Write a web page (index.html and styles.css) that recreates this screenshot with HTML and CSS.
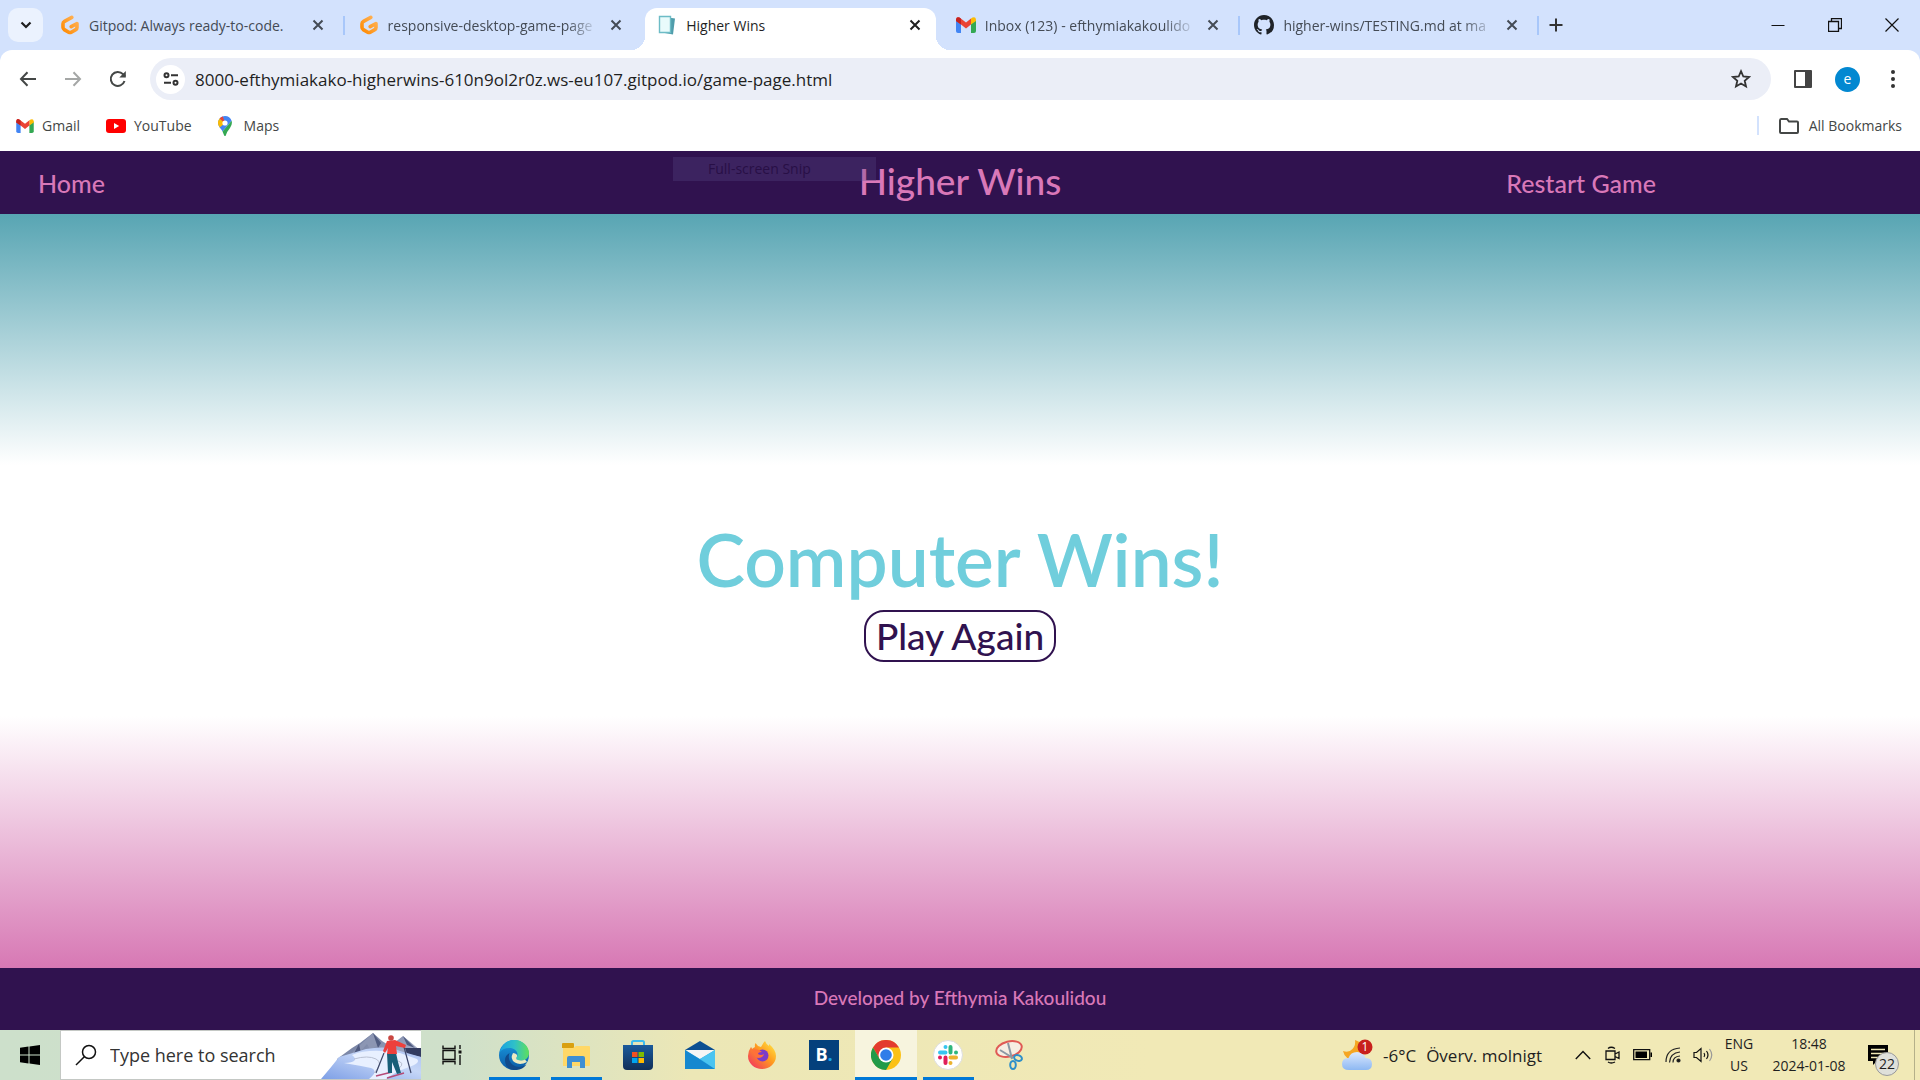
FILE: index.html
```html
<!DOCTYPE html>
<html lang="en">
<head>
<meta charset="utf-8">
<title>Higher Wins</title>
<link rel="stylesheet" href="styles.css">
</head>
<body>
<svg class="defs" aria-hidden="true">
  <defs>
    <linearGradient id="gp" x1="1" y1="0" x2="0" y2="1"><stop offset="0" stop-color="#ffb45b"/><stop offset="1" stop-color="#ff8a00"/></linearGradient>
    <linearGradient id="edgeA" x1="0" y1="0.3" x2="1" y2="0.3"><stop offset="0" stop-color="#1ba3e0"/><stop offset="0.5" stop-color="#2fc0c8"/><stop offset="1" stop-color="#5fe05a"/></linearGradient>
    <linearGradient id="edgeB" x1="0" y1="0" x2="0" y2="1"><stop offset="0" stop-color="#1b9de2"/><stop offset="1" stop-color="#0c59a4"/></linearGradient>
    <linearGradient id="ffx" x1="1" y1="0" x2="0" y2="1"><stop offset="0" stop-color="#fff14a"/><stop offset="0.45" stop-color="#ff9a1f"/><stop offset="1" stop-color="#f0256a"/></linearGradient>
    <linearGradient id="store" x1="0" y1="0" x2="0" y2="1"><stop offset="0" stop-color="#1a5a9c"/><stop offset="1" stop-color="#112f58"/></linearGradient>
    <linearGradient id="cloud" x1="0" y1="0" x2="0" y2="1"><stop offset="0" stop-color="#dbe8ff"/><stop offset="1" stop-color="#8db8f2"/></linearGradient>
    <linearGradient id="snow" x1="0" y1="1" x2="1" y2="0"><stop offset="0" stop-color="#7d9fe6"/><stop offset="0.6" stop-color="#c5d6f7"/><stop offset="1" stop-color="#a9c0f0"/></linearGradient>
    <linearGradient id="rock" x1="0" y1="0" x2="1" y2="1"><stop offset="0" stop-color="#5f6d92"/><stop offset="1" stop-color="#c8cde0"/></linearGradient>
    <symbol id="i-close" viewBox="0 0 12 12"><path d="M1.5 1.5l9 9M10.5 1.5l-9 9" fill="none" stroke="currentColor" stroke-width="2"/></symbol>
    <symbol id="i-gitpod" viewBox="0 0 20 20"><path d="M11.800 2.400L4.500 6.300Q3 7.100 3 8.700v3.600q0 1.500 1.300 2.300l4.400 2.600q1.300.7 2.600 0l4.500-2.600q1.200-.7 1.200-2.100V8.500l-5.800 3.100" fill="none" stroke="url(#gp)" stroke-width="3.600" stroke-linecap="round" stroke-linejoin="round"/></symbol>
    <symbol id="i-gmail" viewBox="0 0 20 16"><path d="M0 3v11q0 2 2 2h3V6.5z" fill="#4285f4"/><path d="M20 3v11q0 2-2 2h-3V6.5z" fill="#34a853"/><path d="M15 1.5v6L20 4V2.6Q19.5-.8 16.500.6z" fill="#fbbc04"/><path d="M0 4V2.4Q.6-.9 3.500.6L10 5.400 15 1.500v6L10 11.500 5 7.500z" fill="#ea4335"/><path d="M0 4V2.400Q.6-.9 3.500.6L5 1.700v5.800z" fill="#c5221f"/></symbol>
  </defs>
</svg>

<div class="tabstrip">
  <button class="tab-search" aria-label="Search tabs"><svg width="12" height="8" viewBox="0 0 12 8"><path d="M1.500 1.500L6 6l4.500-4.500" fill="none" stroke="#1f1f1f" stroke-width="2.200"/></svg></button>
  <div class="tabs">
    <div class="tab sep"><svg class="fav"><use href="#i-gitpod"/></svg><span class="tab-title">Gitpod: Always ready-to-code.</span><button class="tab-close" aria-label="Close tab"><svg><use href="#i-close"/></svg></button></div>
    <div class="tab"><svg class="fav"><use href="#i-gitpod"/></svg><span class="tab-title faded">responsive-desktop-game-page</span><button class="tab-close" aria-label="Close tab"><svg><use href="#i-close"/></svg></button></div>
    <div class="tab active"><svg class="fav" viewBox="0 0 20 20"><path d="M8 2l10 1.500-2 16L5 17.500z" fill="#4f9dab"/><path d="M2.500 1.500h11v16h-11z" fill="#e9fbfb" stroke="#6dbcc6" stroke-width="1.400"/></svg><span class="tab-title">Higher Wins</span><button class="tab-close" aria-label="Close tab"><svg><use href="#i-close"/></svg></button></div>
    <div class="tab sep"><svg class="fav"><use href="#i-gmail"/></svg><span class="tab-title faded">Inbox (123) - efthymiakakoulido</span><button class="tab-close" aria-label="Close tab"><svg><use href="#i-close"/></svg></button></div>
    <div class="tab sep"><svg class="fav" viewBox="0 0 16 16"><path fill="#1f2328" d="M8 0C3.580 0 0 3.580 0 8c0 3.540 2.290 6.530 5.470 7.590.4.070.55-.17.55-.38 0-.19-.01-.82-.01-1.490-2.010.37-2.530-.49-2.690-.94-.09-.23-.48-.94-.82-1.130-.28-.15-.68-.52-.01-.53.63-.01 1.080.58 1.230.82.72 1.210 1.870.87 2.330.66.070-.52.28-.87.51-1.070-1.780-.2-3.640-.89-3.640-3.950 0-.87.31-1.590.82-2.150-.08-.2-.36-1.020.08-2.120 0 0 .67-.21 2.200.82.640-.18 1.320-.27 2-.27s1.360.09 2 .27c1.530-1.040 2.200-.82 2.200-.82.44 1.100.16 1.920.08 2.120.51.56.82 1.270.82 2.150 0 3.070-1.870 3.750-3.650 3.950.29.25.54.73.54 1.480 0 1.070-.01 1.930-.01 2.200 0 .21.15.46.55.38A8.010 8.010 0 0 0 16 8c0-4.420-3.580-8-8-8z"/></svg><span class="tab-title faded">higher-wins/TESTING.md at ma</span><button class="tab-close" aria-label="Close tab"><svg><use href="#i-close"/></svg></button></div>
  </div>
  <button class="new-tab" aria-label="New tab"><svg width="14" height="14" viewBox="0 0 14 14"><path d="M7 .5v13M.5 7h13" stroke="#333" stroke-width="2"/></svg></button>
  <div class="window-controls">
    <button aria-label="Minimize"><svg width="14" height="14" viewBox="0 0 14 14"><path d="M.5 7.500h13" stroke="#111"/></svg></button>
    <button aria-label="Restore"><svg width="14" height="14" viewBox="0 0 14 14"><path d="M.5 3.500h10v10H.5zM3.500 3.500v-3h10v10h-3" fill="none" stroke="#111" stroke-width="1.300"/></svg></button>
    <button aria-label="Close"><svg width="14" height="14" viewBox="0 0 14 14"><path d="M.5.5l13 13M13.500.5l-13 13" stroke="#111" stroke-width="1.200"/></svg></button>
  </div>
</div>

<div class="chrome">
  <div class="toolbar">
    <button class="tool" aria-label="Back"><svg width="18" height="16" viewBox="0 0 18 16"><path d="M17 8H2M8.500 1.300L2 8l6.500 6.700" fill="none" stroke="#444746" stroke-width="2"/></svg></button>
    <button class="tool" aria-label="Forward"><svg width="18" height="16" viewBox="0 0 18 16"><path d="M1 8h15M9.500 1.300L16 8l-6.500 6.700" fill="none" stroke="#a5a7a6" stroke-width="2"/></svg></button>
    <button class="tool" aria-label="Reload"><svg width="18" height="18" viewBox="0 0 18 18"><path d="M15.500 11A7 7 0 1 1 14 4.200L16 6.500" fill="none" stroke="#444746" stroke-width="2"/><path d="M16.800 1v6.500h-6.500z" fill="#444746"/></svg></button>
    <div class="omnibox">
      <button class="site-info" aria-label="Site information"><svg width="16" height="14" viewBox="0 0 16 14" fill="none" stroke="#333" stroke-width="2"><circle cx="3.500" cy="3.200" r="2"/><path d="M8 3.200h7M1 10.800h7"/><circle cx="12.500" cy="10.800" r="2"/></svg></button>
      <input class="url" type="text" aria-label="Address" value="8000-efthymiakako-higherwins-610n9ol2r0z.ws-eu107.gitpod.io/game-page.html">
      <button class="star" aria-label="Bookmark this tab"><svg width="20" height="20" viewBox="0 0 20 20"><path d="M10 2.200l2.300 5.300 5.700.5-4.300 3.800 1.300 5.700-5-3-5 3 1.300-5.700L2 8l5.700-.5z" fill="none" stroke="#333" stroke-width="1.800"/></svg></button>
    </div>
    <button class="end-tool" aria-label="Side panel"><svg width="18" height="18" viewBox="0 0 18 18"><path d="M1 1h16v16H1z" fill="none" stroke="#444" stroke-width="2" stroke-linejoin="round"/><path d="M11 1h6v16h-6z" fill="#444"/></svg></button>
    <button class="end-tool" aria-label="Profile"><span class="avatar">e</span></button>
    <button class="end-tool" aria-label="Menu"><svg width="4" height="18" viewBox="0 0 4 18" fill="#333"><circle cx="2" cy="2" r="2"/><circle cx="2" cy="9" r="2"/><circle cx="2" cy="16" r="2"/></svg></button>
  </div>
  <nav class="bookmarks">
    <a href="#"><svg width="18" height="14"><use href="#i-gmail"/></svg>Gmail</a>
    <a href="#"><svg width="20" height="14" viewBox="0 0 20 14"><rect width="20" height="14" rx="3" fill="#f00"/><path d="M8 4l5.200 3L8 10z" fill="#fff"/></svg>YouTube</a>
    <a href="#" class="maps"><svg width="14" height="20" viewBox="0 0 14 20"><path d="M7 0a7 7 0 0 1 6.600 4.700L4.500 15.500Q3.500 13.500 1.700 11.500.100 9.500 0 7a7 7 0 0 1 7-7z" fill="#4285f4"/><path d="M1.600 2.500L7 7 1.700 11.500Q0 9.500 0 7t1.600-4.500z" fill="#fbbc04"/><path d="M1.600 2.500A7 7 0 0 1 4.800.4L7 7z" fill="#ea4335"/><path d="M13.600 4.700Q14.700 8.500 12 12q-3 3.500-4.200 7.400-.8 1.200-1.600 0L4.500 15.500z" fill="#34a853"/><circle cx="7" cy="7" r="2.600" fill="#fff"/></svg>Maps</a>
    <a href="#" class="all"><svg width="20" height="16" viewBox="0 0 20 16"><path d="M1 2.500V14q0 1 1 1h16q1 0 1-1V4.500q0-1-1-1h-8L8 1H2Q1 1 1 2.500z" fill="none" stroke="#444746" stroke-width="2"/></svg>All Bookmarks</a>
  </nav>
</div>

<header class="game-header">
  <a href="#" class="home">Home</a>
  <h1>Higher Wins</h1>
  <a href="#" class="restart">Restart Game</a>
  <span class="snip-ghost">Full-screen Snip</span>
</header>
<main class="game">
  <h2>Computer Wins!</h2>
  <button class="play">Play Again</button>
</main>
<footer class="game-footer">Developed by Efthymia Kakoulidou</footer>

<div class="taskbar">
  <button class="start" aria-label="Start"><svg width="20" height="20" viewBox="0 0 20 20"><path d="M0 2.800L8.500 1.600v8H0zM9.500 1.500L20 0v9.600H9.500zM0 10.400h8.500v8L0 17.200zM9.500 10.400H20V20L9.500 18.500z"/></svg></button>
  <label class="search">
    <svg width="22" height="22" viewBox="0 0 22 22"><circle cx="14" cy="8" r="6.500" fill="none" stroke="#111" stroke-width="1.500"/><path d="M9.300 12.700L1 21" stroke="#111" stroke-width="1.500"/></svg>
    <input type="text" aria-label="Search" placeholder="Type here to search">
    <svg class="skier" width="100" height="48" viewBox="0 0 100 48">
      <path d="M16 28L31 17l8-5L52 2l9 8 8 5L82 5l18 15v28H16z" fill="url(#rock)"/>
      <path d="M52 2l4 12-6 6-4-7-8 9-2 7-12 0 14-14z" fill="#8c96b3"/>
      <path d="M52 2l8 10-3 5zM82 5l12 12-8-3zM38 13l2 9-8 2z" fill="#4f5b80"/>
      <path d="M84 17l16 0v9l-14-3z" fill="#333c60"/>
      <path d="M0 48Q12 34 18 26q14-4 27-8 22-4 34 2l21 6v22z" fill="url(#snow)"/>
      <path d="M31 24q12-5 30-4l18 2 17 6q4 4-8 8-14 5-23 12H48q10-8 2-11-9-2-27-5 17-1 8-8z" fill="#e8f0ff"/>
      <path d="M33 28q14-4 22 0t-2 14M72 29q15 2 5 9" fill="none" stroke="#b9c0d2"/>
      <path d="M63 22l-8 20M83 16l7 26" stroke="#3c4668" stroke-width="1.200"/>
      <path d="M55 45l16-4M66 47l17-5" stroke="#b54b77" stroke-width="1.500"/>
      <path d="M66 22h9l2 9 3 11-4 1-5-12v11h-4z" fill="#195f78"/>
      <path d="M66 10l8-1 11 5-1 3-9-2 1 8H66l1-6-3 5-2-2z" fill="#ed403c"/>
      <circle cx="70" cy="7" r="2.800" fill="#c94742"/>
    </svg>
  </label>
  <button class="app" aria-label="Task view"><svg width="20" height="20" viewBox="0 0 20 20" fill="none" stroke="#111" stroke-width="1.400"><path d="M1 5.500h12v9H1zM1 .5v3h12v-3M1 19.500v-3h12v3M18 0v4M18 10v10"/><path d="M16.500 5.500h3v3h-3z" fill="#111" stroke="none"/></svg></button>
  <button class="app open" aria-label="Edge"><svg width="30" height="30" viewBox="0 0 30 30"><circle cx="15" cy="15" r="15" fill="url(#edgeB)"/><path d="M1 12C3 4 9 0 15 0c9 0 15 6.500 15 13 0 5-4 7.500-8 7.500-3 0-5-1-5-2 0-1 1.500-1.500 1.500-4 0-4-4-6.500-8-6.500C6 8 3 9.500 1 12z" fill="url(#edgeA)"/><path d="M10.500 13Q8 20 14 25q6 4 13.500-.5Q23 30.500 15 30 6 29 6 20q0-4.500 4.500-7z" fill="#114a8b"/><path d="M14 13q-3.500 6 2 9.500 5 3 12-.5l-2-2.500q-3 1.500-7 .5-3-1-1-3.500.8-3-4-3.500z" fill="#eceac2"/></svg></button>
  <button class="app open" aria-label="File Explorer"><svg width="28" height="25" viewBox="0 0 28 25"><path d="M0 1q0-1 1-1h10q1 0 1 1v4H0z" fill="#d9a010"/><path d="M1 5h10l3-2h13q1 0 1 1v18q0 1-1 1H1z" fill="#ffd867"/><path d="M5 25V15q0-2 2-2h14q2 0 2 2v10h-5v-6h-8v6z" fill="#3f8fd2"/></svg></button>
  <button class="app" aria-label="Microsoft Store"><svg width="30" height="30" viewBox="0 0 30 30"><path d="M9 6V2.500Q9 1 10.500 1h9Q21 1 21 2.500V6" fill="none" stroke="#3cbcf0" stroke-width="2"/><path d="M0 5h30v21q0 4-4 4H4q-4 0-4-4z" fill="url(#store)"/><path d="M9 12h5.500v5H9z" fill="#f25022"/><path d="M15.500 12H21v5h-5.500z" fill="#7fba00"/><path d="M9 18h5.500v5H9z" fill="#00a4ef"/><path d="M15.500 18H21v5h-5.500z" fill="#ffb900"/></svg></button>
  <button class="app" aria-label="Mail"><svg width="30" height="28" viewBox="0 0 30 28"><path d="M15 0l15 9H0z" fill="#0b4f92"/><path d="M2 9h26v12H2z" fill="#f5f5f5"/><path d="M0 9l15 9 15-9v19H0z" fill="#2aa7e3"/><path d="M0 9l30 19H0z" fill="#1688cf"/><path d="M15 18L30 9v19z" fill="#4bc4f0"/></svg></button>
  <button class="app" aria-label="Firefox"><svg width="28" height="28" viewBox="0 0 28 28"><path d="M3 6q1 1 1 2 1-1 3-2-.5-2 .5-4Q9 5 13 6q2-4 4-6 1 3 4 5 0-1 0-2 7 6 7 12a14 13 0 1 1-28 0Q0 10 3 6z" fill="url(#ffx)"/><circle cx="14.500" cy="14.500" r="6" fill="#7b3cc9"/><path d="M4 9q6-2 10 2-4 0-4 2 3 2 6 0-1 4-6 4-4-1-6-8z" fill="#ff7139"/></svg></button>
  <button class="app" aria-label="Booking"><span class="booking">B<i>.</i></span></button>
  <button class="app open current" aria-label="Chrome"><svg width="30" height="30" viewBox="0 0 30 30"><circle cx="15" cy="15" r="15" fill="#fbc116"/><path d="M2 7.500A15 15 0 0 1 28 7.500H15L8.500 18.800z" fill="#e33b2e"/><path d="M2 7.500A15 15 0 0 0 15 30l6.500-11.200H8.500z" fill="#229a49"/><circle cx="15" cy="15" r="7.500" fill="#fff"/><circle cx="15" cy="15" r="5.800" fill="#2f7de9"/></svg></button>
  <button class="app open" aria-label="Slack"><svg width="30" height="30" viewBox="0 0 30 30"><circle cx="15" cy="15" r="14.500" fill="#fff" stroke="#ddd"/><g fill="none" stroke-width="4" stroke-linecap="round"><path d="M12.500 7h0M7 12.500h5.500" stroke="#36c5f0"/><path d="M17.500 7v5.500M23 12.500h0" stroke="#2eb67d"/><path d="M17.500 17.500H23M17.500 23h0" stroke="#ecb22e"/><path d="M12.500 17.500V23M7 17.500h0" stroke="#e01e5a"/></g></svg></button>
  <button class="app" aria-label="Snipping Tool"><svg width="30" height="30" viewBox="0 0 30 30" fill="none"><ellipse cx="14" cy="9" rx="13" ry="7.500" transform="rotate(-14 14 9)" stroke="#e05a55" stroke-width="2" fill="#f6eee2"/><path d="M5 10l13 8M13 3l4 16" stroke="#8b98a3" stroke-width="2"/><ellipse cx="23" cy="18" rx="4" ry="2.800" transform="rotate(20 23 18)" stroke="#2d8fc9" stroke-width="2"/><ellipse cx="18" cy="25" rx="2.800" ry="4" stroke="#2d8fc9" stroke-width="2"/></svg></button>

  <div class="tray">
    <button class="weather"><svg width="32" height="32" viewBox="0 0 32 32"><path d="M14 1q9 3 9 11t-9 9Q4 21 2 12q6 2 9.500-2T14 1z" fill="#f5a623"/><path d="M8 31q-7 0-7-6t6.500-6q2-6 8.500-6 7 0 8.500 6 6.500 0 6.500 6t-6 6z" fill="url(#cloud)"/><circle cx="24" cy="8" r="7.500" fill="#c8201d"/><text x="24" y="12" text-anchor="middle" class="alert">1</text></svg><span>-6°C</span><span>Överv. molnigt</span></button>
    <button class="tray-icon" aria-label="Show hidden icons"><svg width="16" height="10" viewBox="0 0 16 10"><path d="M.8 9L8 1.500 15.200 9" fill="none" stroke="#111" stroke-width="1.400"/></svg></button>
    <button class="tray-icon" aria-label="Meet now"><svg width="16" height="18" viewBox="0 0 16 18" fill="none" stroke="#111" stroke-width="1.300"><path d="M1 5h9v8.500H1zM10 8l4-2v6.500l-4-2M3 2.500Q6 0 10 2.500M3 16q3 2 7 0"/></svg></button>
    <button class="tray-icon" aria-label="Battery"><svg width="20" height="12" viewBox="0 0 20 12"><path d="M.7.7h16v10H.7z" fill="none" stroke="#111" stroke-width="1.300"/><path d="M2.500 2.500h11.500v6.500H2.500zM17.500 3.500H19v4.500h-1.500z"/></svg></button>
    <button class="tray-icon" aria-label="Wi-Fi"><svg width="16" height="16" viewBox="0 0 16 16" fill="none" stroke="#222" stroke-width="1.200"><path d="M1 15Q1 2 15 1M4.500 15.500Q5 6 15 5M8 15.500Q8 9.500 15 9"/><circle cx="13.500" cy="13.500" r="1.500" fill="#111"/></svg></button>
    <button class="tray-icon" aria-label="Volume"><svg width="20" height="16" viewBox="0 0 20 16" fill="none" stroke="#111" stroke-width="1.200"><path d="M1 5.500h2.500L8 1.500v13L3.500 10.500H1zM11 6q1.500 2 0 4M13.500 4q3 4 0 8"/><path d="M16.500 2q4.500 6 0 12" stroke="#999"/></svg></button>
    <button class="lang">ENG<br>US</button>
    <button class="clock">18:48<br>2024-01-08</button>
    <button class="notify" aria-label="Notifications"><svg width="20" height="20" viewBox="0 0 20 20"><path d="M0 0h20v16H9l-4 4v-4H0z"/><path d="M3 4.500h14M3 8.500h14M3 12.500h8" stroke="#f1e9b6" stroke-width="1.500"/></svg><span class="badge">22</span></button>
  </div>
</div>
</body>
</html>
```

FILE: styles.css
```css
* { box-sizing: border-box; }
body {
  margin: 0;
  min-height: 100vh;
  display: flex;
  flex-direction: column;
  font-family: "Open Sans", "Noto Sans", sans-serif;
  font-size: 14px;
  color: #1f1f1f;
  background: #fff;
}
button, input {
  font: inherit;
  color: inherit;
  border: 0;
  background: none;
  padding: 0;
  margin: 0;
  outline: 0;
}
button { display: flex; align-items: center; justify-content: center; flex: none; }
a { color: inherit; text-decoration: none; }
svg { flex: none; }
.defs { position: absolute; width: 0; height: 0; }

/* Tab strip */
.tabstrip { display: flex; align-items: center; height: 50px; padding-left: 8px; background: #d3e2fd; }
.tab-search { flex: none; width: 35px; height: 34px; border-radius: 10px; background: #ebf2fe; }
.tabs { display: flex; flex: 0 1 1490px; align-self: stretch; gap: 8px; padding: 8px 0 0 5px; min-width: 0; }
.tab {
  position: relative;
  display: flex;
  align-items: center;
  flex: 1 1 0;
  min-width: 0;
  padding: 0 12px 8px;
  color: #444b55;
}
.tab.active { background: #fff; border-radius: 12px 12px 0 0; color: #1f1f1f; }
.tab.active::before, .tab.active::after {
  content: "";
  position: absolute;
  bottom: 0;
  width: 14px;
  height: 14px;
}
.tab.active::before { right: 100%; background: radial-gradient(circle at 0 0, transparent 14px, #fff 14px); }
.tab.active::after { left: 100%; background: radial-gradient(circle at 100% 0, transparent 14px, #fff 14px); }
.tab.sep::after {
  content: "";
  position: absolute;
  top: 8px;
  right: -6px;
  width: 2px;
  height: 19px;
  background: #a8c7fa;
}
.fav { width: 20px; height: 20px; margin-right: 9px; }
.tab-title { flex: 1; min-width: 0; overflow: hidden; white-space: nowrap; margin-right: 8px; }
.tab-title.faded { mask-image: linear-gradient(90deg, #000 calc(100% - 32px), transparent); }
.tab-close { width: 18px; height: 18px; }
.tab-close svg { width: 12px; height: 12px; }
.new-tab { width: 34px; height: 34px; margin-left: 6px; }
.window-controls { display: flex; margin-left: auto; }
.window-controls button { width: 57px; height: 48px; }

/* Toolbar and bookmarks */
.chrome { background: linear-gradient(#d3e2fd 12px, #fff 12px); }
.toolbar { display: flex; align-items: center; height: 58px; padding: 0 5px; background: #fff; border-radius: 12px 12px 0 0; }
.tool { width: 45px; height: 40px; }
.omnibox {
  display: flex;
  align-items: center;
  flex: 1;
  height: 42px;
  margin: 0 9px 0 10px;
  padding: 0 14px 0 6px;
  border-radius: 21px;
  background: #ebeef7;
}
.site-info { width: 29px; height: 29px; border-radius: 50%; background: #fff; }
.url { flex: 1; min-width: 0; margin-left: 10px; font-size: 17px; }
.star { width: 32px; height: 32px; }
.end-tool { width: 45px; height: 40px; }
.avatar { width: 25px; height: 25px; border-radius: 50%; background: #0288d1; color: #fff; font-size: 14px; line-height: 23px; text-align: center; }
.bookmarks { display: flex; align-items: center; height: 35px; gap: 26px; margin-bottom: 8px; padding: 0 18px 0 16px; color: #444746; }
.bookmarks a { display: flex; align-items: center; gap: 8px; }
.bookmarks .maps { gap: 12px; }
.bookmarks .all { margin-left: auto; gap: 10px; padding-left: 20px; border-left: 2px solid #d3e2fd; }

/* Game page */
.game-header {
  position: relative;
  display: grid;
  grid-template-columns: 1fr auto 1fr;
  align-items: center;
  height: 63px;
  padding: 0 38px;
  background: #30124f;
  color: #d978b8;
  font-family: Lato, sans-serif;
  font-size: 25px;
  font-weight: 500;
}
.game-header h1 { margin: 0; padding-bottom: 4px; font-size: 37px; line-height: 56px; font-weight: 500; }
.restart { justify-self: end; margin-right: 226px; }
.snip-ghost {
  position: absolute;
  left: 673px;
  top: 6px;
  width: 203px;
  height: 24px;
  padding-left: 35px;
  font: 14px/24px "Open Sans", sans-serif;
  color: #280f46;
  background: rgba(90, 75, 135, 0.3);
}
.game {
  flex: 1;
  display: flex;
  flex-direction: column;
  align-items: center;
  justify-content: center;
  gap: 12px;
  font-family: Lato, sans-serif;
  background: linear-gradient(#58a5b3, #fff 33.3%, #fff 66.6%, #d778b4);
}
.game h2 { margin: 0; font-size: 73px; line-height: 78px; font-weight: 600; color: #70cedc; }
.play {
  height: 52px;
  padding: 0 10px 2px;
  border: 2px solid #30124f;
  border-radius: 20px;
  color: #30124f;
  font-size: 37px;
  font-weight: 500;
}
.game-footer {
  height: 62px;
  line-height: 60px;
  text-align: center;
  background: #30124f;
  color: #d978b8;
  font-family: Lato, sans-serif;
  font-size: 19px;
  font-weight: 500;
}

/* Taskbar */
.taskbar {
  display: flex;
  height: 50px;
  background: linear-gradient(90deg, #cde0cb 0, #cfe0ca 24%, #ece7b6 36%, #f1e9b6 60%, #f1e9b6);
}
.start { width: 60px; }
.search {
  display: flex;
  align-items: center;
  width: 361px;
  padding-left: 14px;
  border: 1px solid #c4c8c4;
  border-right: 0;
  background: #fff;
}
.search input { flex: 1; min-width: 0; margin-left: 13px; font-size: 18px; }
.search input::placeholder { color: #333; opacity: 1; }
.app { width: 62px; }
.app.open { background: linear-gradient(#0078d7, #0078d7) 50% 100% / 51px 3px no-repeat; }
.app.open.current { background: linear-gradient(#0078d7, #0078d7) 50% 100% / 62px 3px no-repeat #f7f4de; }
.booking { width: 30px; height: 30px; background: #04407c; color: #fff; font-size: 18px; line-height: 29px; font-weight: 700; }
.booking i { color: #19a5e8; font-style: normal; }
.tray { display: flex; margin-left: auto; padding-right: 5px; }
.tray > button { color: #1f1f1f; }
.tray > .weather { gap: 10px; padding-right: 26px; font-size: 17px; }
.alert { font-size: 12px; fill: #fff; }
.tray-icon { width: 30px; }
.lang { width: 42px; font-size: 14px; line-height: 22px; }
.clock { width: 98px; font-size: 14px; line-height: 22px; }
.notify { position: relative; width: 57px; padding-right: 16px; border-right: 1px solid #b5b08a; }
.badge {
  position: absolute;
  left: 17px;
  top: 22px;
  width: 24px;
  height: 24px;
  border: 1px solid #999;
  border-radius: 50%;
  background: #dfe0da;
  font-size: 14px;
  line-height: 22px;
  text-align: center;
}
```
